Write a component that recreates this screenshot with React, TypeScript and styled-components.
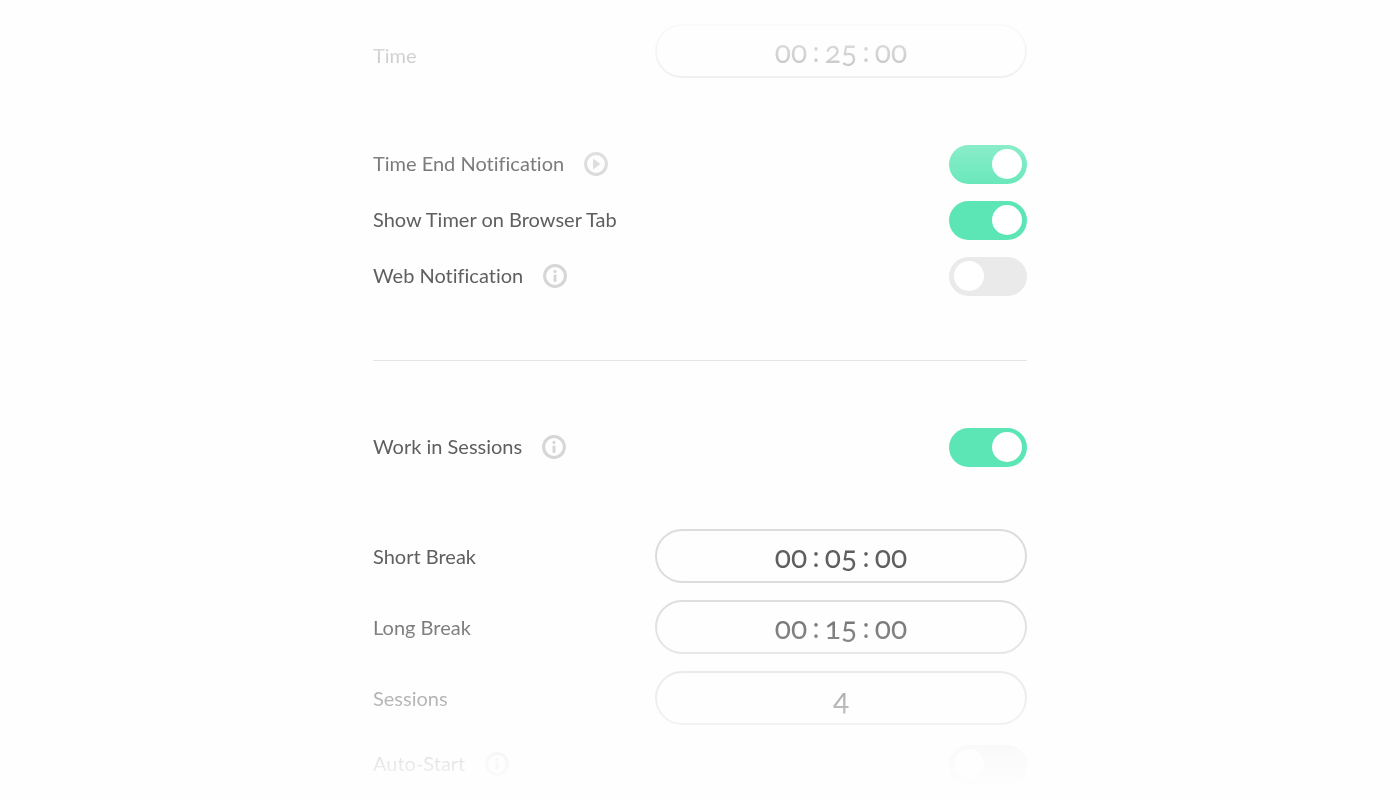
import React, { useId, useState } from 'react';
import styled, { createGlobalStyle } from 'styled-components';

const GlobalStyle = createGlobalStyle`
  *, *::before { box-sizing: border-box; }
  body {
    margin: 0;
    background: #fefefe;
    color: #5f5f5f;
    font-family: Lato, 'Open Sans', sans-serif;
    font-size: 20px;
    line-height: 26px;
    font-variant-ligatures: none;
  }
`;

const Page = styled.main`
  min-height: 100vh;
  padding: 24px 24px 16px;
  mask-image: linear-gradient(
    transparent,
    #000 200px,
    #000 calc(100% - 210px),
    transparent calc(100% - 8px)
  );
`;

const Settings = styled.form`
  display: flex;
  flex-direction: column;
  max-width: 654px;
  margin: 0 auto;
`;

const Group = styled.section<{ $space: number }>`
  display: grid;
  gap: 17px;
  margin-top: ${(p) => p.$space}px;
`;

const Row = styled.div<{ $align?: string }>`
  display: flex;
  align-items: ${(p) => p.$align ?? 'center'};
  justify-content: space-between;
`;

const Name = styled.div`
  display: flex;
  align-items: center;
  gap: 20px;
  padding-bottom: 1px;

  label {
    padding-bottom: 2px;
  }
`;

const Divider = styled.hr`
  width: 100%;
  height: 1px;
  margin: 64px 0 0;
  border: 0;
  background: #e4e4e4;
`;

const IconButton = styled.button`
  display: flex;
  padding: 0;
  border: 0;
  background: none;
  color: #d6d6d6;
  cursor: pointer;
`;

const Switch = styled.input`
  appearance: none;
  display: flex;
  flex: none;
  width: 78px;
  height: 39px;
  margin: 0;
  padding: 4px 5px;
  border-radius: 20px;
  background: #eaeaea;
  cursor: pointer;

  &::before {
    content: '';
    width: 30px;
    height: 30px;
    border-radius: 50%;
    background: #fff;
  }

  &:checked {
    justify-content: flex-end;
    background: #5de6b5;
  }
`;

const Field = styled.div`
  display: flex;
  align-items: center;
  justify-content: center;
  flex: 0 1 372px;
  height: 54px;
  border: 2px solid #dcdcdc;
  border-radius: 27px;
`;

const Digits = styled.input`
  width: 38px;
  padding: 0;
  border: 0;
  outline: 0;
  background: none;
  color: inherit;
  font: inherit;
  font-size: 30px;
  line-height: 36px;
  font-variant-numeric: oldstyle-nums;
  text-align: center;
`;

const Colon = styled.span`
  width: 12px;
  font-size: 28px;
  text-align: center;
`;

function InfoIcon() {
  return (
    <svg width="24" height="24" viewBox="0 0 24 24" aria-hidden="true">
      <circle cx="12" cy="12" r="10.4" fill="none" stroke="currentColor" strokeWidth="3" />
      <circle cx="12" cy="7.4" r="1.6" fill="currentColor" />
      <path d="M12 11.8v4.8" stroke="currentColor" strokeWidth="3" strokeLinecap="round" />
    </svg>
  );
}

function PlayIcon() {
  return (
    <svg width="24" height="24" viewBox="0 0 24 24" aria-hidden="true">
      <circle cx="12" cy="12" r="10.4" fill="none" stroke="currentColor" strokeWidth="3" />
      <path d="M9 6.6v10.8L16.4 12z" fill="currentColor" />
    </svg>
  );
}

function SwitchRow({ label, on = false, icon }: { label: string; on?: boolean; icon?: 'info' | 'play' }) {
  const id = useId();
  const [checked, setChecked] = useState(on);
  return (
    <Row>
      <Name>
        <label htmlFor={id}>{label}</label>
        {icon && (
          <IconButton type="button" aria-label={icon === 'info' ? `About ${label}` : `Play ${label}`}>
            {icon === 'info' ? <InfoIcon /> : <PlayIcon />}
          </IconButton>
        )}
      </Name>
      <Switch id={id} type="checkbox" role="switch" checked={checked} onChange={() => setChecked(!checked)} />
    </Row>
  );
}

function TimeRow({ label, value, align }: { label: string; value: string; align?: string }) {
  const id = useId();
  const [h, m, s] = value.split(':');
  return (
    <Row $align={align}>
      <label htmlFor={id}>{label}</label>
      <Field>
        <Digits id={id} defaultValue={h} />
        <Colon>:</Colon>
        <Digits aria-label={`${label} minutes`} defaultValue={m} />
        <Colon>:</Colon>
        <Digits aria-label={`${label} seconds`} defaultValue={s} />
      </Field>
    </Row>
  );
}

function NumberRow({ label, value }: { label: string; value: string }) {
  const id = useId();
  return (
    <Row>
      <label htmlFor={id}>{label}</label>
      <Field>
        <Digits id={id} defaultValue={value} />
      </Field>
    </Row>
  );
}

export default function App() {
  return (
    <>
      <GlobalStyle />
      <Page>
        <Settings>
          <TimeRow label="Time" value="00:25:00" align="baseline" />
          <Group $space={67}>
            <SwitchRow label="Time End Notification" icon="play" on />
            <SwitchRow label="Show Timer on Browser Tab" on />
            <SwitchRow label="Web Notification" icon="info" />
          </Group>
          <Divider />
          <Group $space={67}>
            <SwitchRow label="Work in Sessions" icon="info" on />
          </Group>
          <Group $space={62}>
            <TimeRow label="Short Break" value="00:05:00" />
            <TimeRow label="Long Break" value="00:15:00" />
            <NumberRow label="Sessions" value="4" />
          </Group>
          <Group $space={20}>
            <SwitchRow label="Auto-Start" icon="info" />
          </Group>
        </Settings>
      </Page>
    </>
  );
}
